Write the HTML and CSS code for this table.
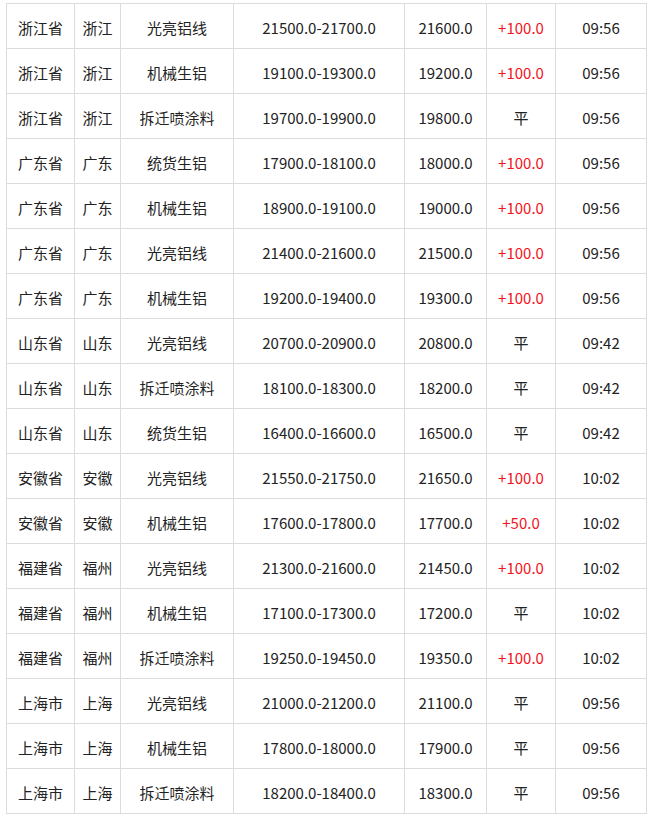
FILE: index.html
```html
<!DOCTYPE html>
<html lang="zh">
<head>
<meta charset="utf-8">
<link rel="stylesheet" href="styles.css">
</head>
<body>
<table class="price-table">
<colgroup>
<col class="c1"><col class="c2"><col class="c3"><col class="c4"><col class="c5"><col class="c6"><col class="c7">
</colgroup>
<tbody>
<tr><td>浙江省</td><td>浙江</td><td>光亮铝线</td><td>21500.0-21700.0</td><td>21600.0</td><td class="up">+100.0</td><td>09:56</td></tr>
<tr><td>浙江省</td><td>浙江</td><td>机械生铝</td><td>19100.0-19300.0</td><td>19200.0</td><td class="up">+100.0</td><td>09:56</td></tr>
<tr><td>浙江省</td><td>浙江</td><td>拆迁喷涂料</td><td>19700.0-19900.0</td><td>19800.0</td><td>平</td><td>09:56</td></tr>
<tr><td>广东省</td><td>广东</td><td>统货生铝</td><td>17900.0-18100.0</td><td>18000.0</td><td class="up">+100.0</td><td>09:56</td></tr>
<tr><td>广东省</td><td>广东</td><td>机械生铝</td><td>18900.0-19100.0</td><td>19000.0</td><td class="up">+100.0</td><td>09:56</td></tr>
<tr><td>广东省</td><td>广东</td><td>光亮铝线</td><td>21400.0-21600.0</td><td>21500.0</td><td class="up">+100.0</td><td>09:56</td></tr>
<tr><td>广东省</td><td>广东</td><td>机械生铝</td><td>19200.0-19400.0</td><td>19300.0</td><td class="up">+100.0</td><td>09:56</td></tr>
<tr><td>山东省</td><td>山东</td><td>光亮铝线</td><td>20700.0-20900.0</td><td>20800.0</td><td>平</td><td>09:42</td></tr>
<tr><td>山东省</td><td>山东</td><td>拆迁喷涂料</td><td>18100.0-18300.0</td><td>18200.0</td><td>平</td><td>09:42</td></tr>
<tr><td>山东省</td><td>山东</td><td>统货生铝</td><td>16400.0-16600.0</td><td>16500.0</td><td>平</td><td>09:42</td></tr>
<tr><td>安徽省</td><td>安徽</td><td>光亮铝线</td><td>21550.0-21750.0</td><td>21650.0</td><td class="up">+100.0</td><td>10:02</td></tr>
<tr><td>安徽省</td><td>安徽</td><td>机械生铝</td><td>17600.0-17800.0</td><td>17700.0</td><td class="up">+50.0</td><td>10:02</td></tr>
<tr><td>福建省</td><td>福州</td><td>光亮铝线</td><td>21300.0-21600.0</td><td>21450.0</td><td class="up">+100.0</td><td>10:02</td></tr>
<tr><td>福建省</td><td>福州</td><td>机械生铝</td><td>17100.0-17300.0</td><td>17200.0</td><td>平</td><td>10:02</td></tr>
<tr><td>福建省</td><td>福州</td><td>拆迁喷涂料</td><td>19250.0-19450.0</td><td>19350.0</td><td class="up">+100.0</td><td>10:02</td></tr>
<tr><td>上海市</td><td>上海</td><td>光亮铝线</td><td>21000.0-21200.0</td><td>21100.0</td><td>平</td><td>09:56</td></tr>
<tr><td>上海市</td><td>上海</td><td>机械生铝</td><td>17800.0-18000.0</td><td>17900.0</td><td>平</td><td>09:56</td></tr>
<tr><td>上海市</td><td>上海</td><td>拆迁喷涂料</td><td>18200.0-18400.0</td><td>18300.0</td><td>平</td><td>09:56</td></tr>
</tbody>
</table>
</body>
</html>
```
FILE: styles.css
```css
html, body {
  margin: 0;
  padding: 0;
  background: #fff;
}
body {
  padding: 3px 0 0 6px;
  font-family: "Noto Sans CJK SC", "Noto Sans", sans-serif;
  font-size: 15px;
  color: #222;
}
.price-table {
  border-collapse: collapse;
  table-layout: fixed;
  width: 640px;
}
.c1 { width: 68px; }
.c2 { width: 46px; }
.c3 { width: 113px; }
.c4 { width: 171px; }
.c5 { width: 82px; }
.c6 { width: 69px; }
.c7 { width: 91px; }
.price-table td {
  border: 1px solid #dcdcdc;
  height: 45px;
  padding: 3px 0 0 0;
  box-sizing: border-box;
  text-align: center;
  vertical-align: middle;
  line-height: 20px;
  white-space: nowrap;
}
.price-table td.up {
  color: #f2141e;
}
```
